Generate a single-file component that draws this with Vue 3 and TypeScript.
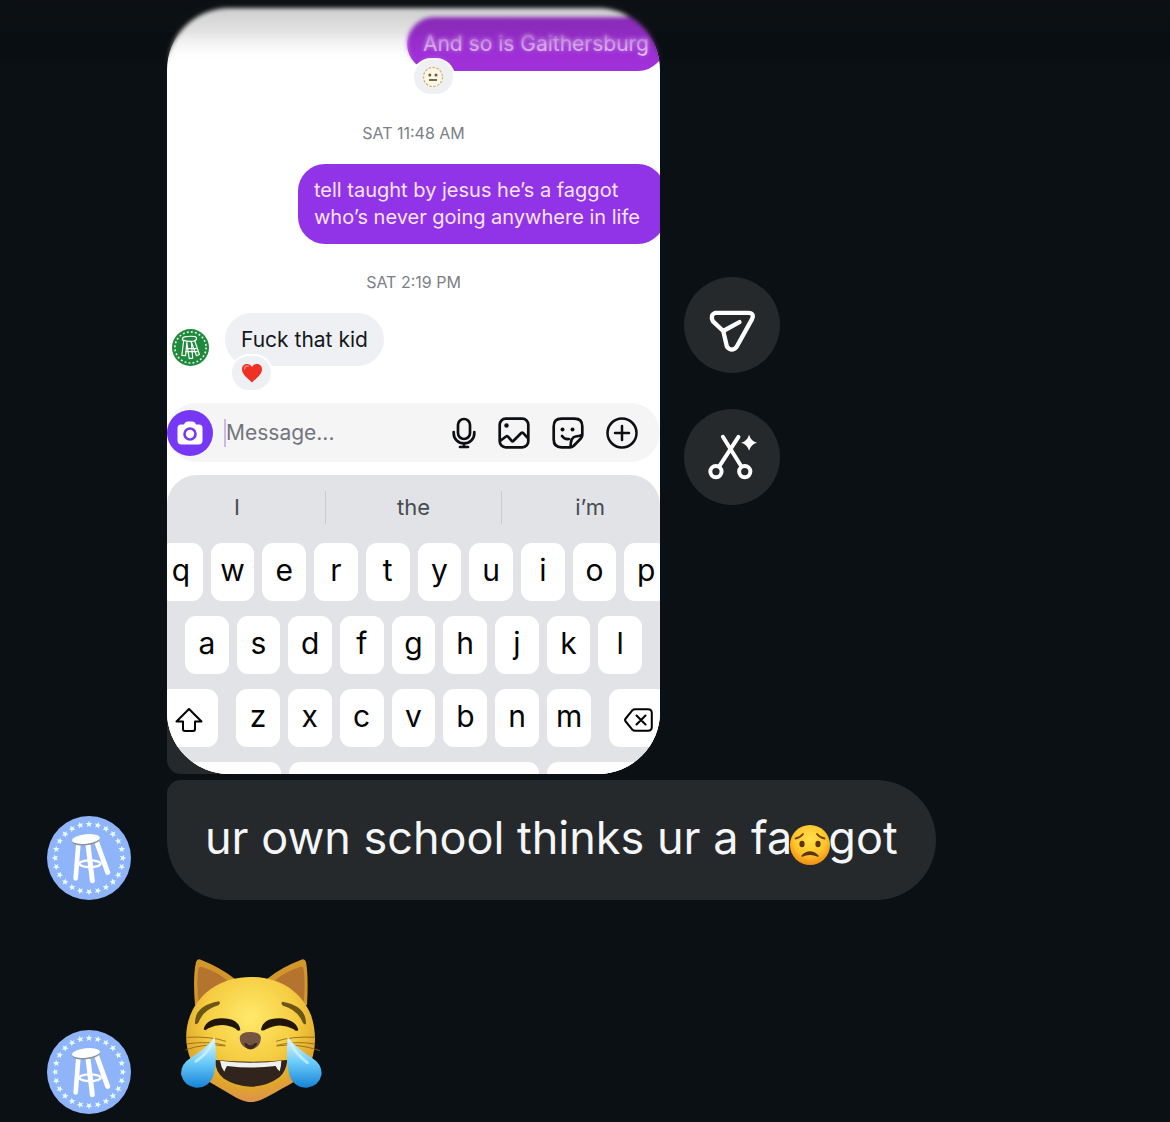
<script setup lang="ts">
import { ref } from 'vue'

interface Star {
  x: number
  y: number
  angle: number
}

const draft = ref('')
const suggestions: string[] = ['I', 'the', 'i’m']
const topRow: string[] = [...'qwertyuiop']
const homeRow: string[] = [...'asdfghjkl']
const bottomRow: string[] = [...'zxcvbnm']

const stars: Star[] = Array.from({ length: 24 }, (_, i) => {
  const turn = (i / 24) * Math.PI * 2
  return {
    x: 177 + Math.sin(turn) * 102,
    y: 174 - Math.cos(turn) * 102,
    angle: i * 15,
  }
})
const starShape = '0,-10 3,-3 10,-3 4.6,2 6.4,9 0,5 -6.4,9 -4.6,2 -10,-3 -3,-3'

function type(key: string): void {
  draft.value += key
}
function erase(): void {
  draft.value = draft.value.slice(0, -1)
}
</script>

<template>
  <main class="thread">
    <svg class="defs" aria-hidden="true">
      <symbol id="badge" viewBox="51 48 252 252">
        <circle cx="177" cy="174" r="126" fill="#8fb4f9" />
        <polygon
          v-for="star in stars"
          :key="star.angle"
          :points="starShape"
          :transform="`translate(${star.x} ${star.y}) rotate(${star.angle})`"
          fill="#e6fbff"
        />
        <g fill="none" stroke="#fff" stroke-linecap="round">
          <ellipse cx="180" cy="191" rx="32" ry="10" stroke-width="7" />
          <path d="M145 132 137 235" stroke-width="14" />
          <path d="M174 134 187 242" stroke-width="15" />
          <path d="M200 126 233 217" stroke-width="15" />
        </g>
        <ellipse cx="168" cy="122" rx="41" ry="14" fill="#8a94a0" transform="rotate(-6 168 122)" />
        <ellipse cx="168" cy="117" rx="42" ry="14" fill="#fff" transform="rotate(-6 168 117)" />
      </symbol>
    </svg>

    <section class="row">
      <div class="shot-wrap">
        <article class="shot">
          <div class="chat">
            <div class="bubble sent first">
              And so is Gaithersburg
              <span class="reaction">
                <svg width="22" height="22" viewBox="0 0 22 22" role="img" aria-label="neutral face">
                  <circle cx="11" cy="11" r="9.5" fill="#fbf6e6" stroke="#d3b873" stroke-width="1.3" stroke-dasharray="2.5 1.5" />
                  <circle cx="7.8" cy="9" r="1.5" fill="#6b5a3c" />
                  <circle cx="14" cy="9" r="1.5" fill="#6b5a3c" />
                  <path d="M7 14h8" stroke="#7a684a" stroke-width="1.8" />
                </svg>
              </span>
            </div>
            <time class="stamp">SAT 11:48 AM</time>
            <div class="bubble sent long">tell taught by jesus he’s a faggot<br />who’s never going anywhere in life</div>
            <time class="stamp">SAT 2:19 PM</time>
            <div class="incoming">
              <svg class="mini" viewBox="51 48 252 252" role="img" aria-label="Profile picture">
                <circle cx="177" cy="174" r="126" fill="#1f8a3b" />
                <circle cx="177" cy="174" r="106" fill="none" stroke="#e9f7ec" stroke-width="11" stroke-dasharray="13 14.7" />
                <g fill="none" stroke="#fff" stroke-width="8" stroke-linejoin="round">
                  <path d="M122 122q-2-16 14-20 40-8 74-2 10 4 8 18l-12 12 32 92-20 8-36-96 10 112-24 4-16-112-8 92-26-2 12-98z" />
                  <path d="M146 182h74M144 202h82M126 124q44 16 88 2" />
                </g>
              </svg>
              <div class="bubble received">
                Fuck that kid
                <span class="reaction">
                  <svg width="22" height="20" viewBox="0 0 22 20" role="img" aria-label="heart">
                    <path d="M11 19.500C7 15.500 1 11.500 1 6.200 1 .5 8.500-.8 11 4c2.500-4.800 10-3.500 10 2.200 0 5.300-6 9.300-10 13.300z" fill="#ee3124" />
                    <path d="M3.500 6c0-2.400 2-3.400 3.600-3" fill="none" stroke="#ff8a70" stroke-width="1.500" stroke-linecap="round" />
                  </svg>
                </span>
              </div>
            </div>
          </div>

          <form class="composer" @submit.prevent>
            <button class="camera" type="button" aria-label="Camera">
              <svg width="26" height="24" viewBox="0 0 26 24">
                <path d="M7.500 2.500Q8.500.5 10.500.5h5q2 0 3 2l.5 1h3q3.500 0 3.500 3.500v12.500q0 4-4 4h-17q-4 0-4-4V7q0-3.500 3.500-3.500H7z" fill="#fff" />
                <circle cx="13" cy="13" r="5.500" fill="none" stroke="#7638f5" stroke-width="2.600" />
              </svg>
            </button>
            <input v-model="draft" class="field" type="text" aria-label="Message" placeholder="Message..." />
            <div class="tools">
              <button type="button" aria-label="Voice message">
                <svg width="24" height="32" viewBox="0 0 24 32" fill="none" stroke="#0d0f12" stroke-width="2.700" stroke-linecap="round">
                  <rect x="6" y="2" width="12" height="20" rx="6" />
                  <path d="M1.700 15v1.500a10.300 9.800 0 0 0 20.600 0V15M12 26.500V30M8 30h8" />
                </svg>
              </button>
              <button type="button" aria-label="Photo">
                <svg width="32" height="32" viewBox="0 0 32 32" fill="none" stroke="#0d0f12" stroke-width="2.700" stroke-linejoin="round">
                  <rect x="1.700" y="1.700" width="28.600" height="28.600" rx="6" />
                  <circle cx="8.500" cy="8.500" r="2.200" fill="#0d0f12" stroke="none" />
                  <path d="M2 24 8 19.500q1-.8 2 .2l3.500 4q1 1 2 0l7.500-7.500q1.200-1 2.300 0l5 5.500" />
                </svg>
              </button>
              <button type="button" aria-label="Sticker">
                <svg width="32" height="32" viewBox="0 0 32 32" fill="none" stroke="#0d0f12" stroke-width="2.700" stroke-linejoin="round" stroke-linecap="round">
                  <path d="M18 30.300H9.500q-7.800 0-7.800-7.800v-13q0-7.800 7.800-7.800h13q7.800 0 7.800 7.800V18q0 2-1.500 3.500L21.500 29Q20 30.300 18 30.300zM18.500 30q.2-10 5-10.500 3.500-.3 6.500-1.500" />
                  <path d="M10 19q2.500 3.600 7 3" />
                  <circle cx="10.500" cy="12.500" r="2" fill="#0d0f12" stroke="none" />
                  <circle cx="20.500" cy="12.500" r="2" fill="#0d0f12" stroke="none" />
                </svg>
              </button>
              <button type="button" aria-label="More">
                <svg width="32" height="32" viewBox="0 0 32 32" fill="none" stroke="#0d0f12" stroke-width="2.500" stroke-linecap="round">
                  <circle cx="16" cy="16" r="14.500" />
                  <path d="M16 9v14M9 16h14" />
                </svg>
              </button>
            </div>
          </form>

          <div class="keyboard">
            <div class="suggestions">
              <button v-for="word in suggestions" :key="word" type="button" @click="type(word + ' ')">
                {{ word }}
              </button>
            </div>
            <div class="keys">
              <button v-for="key in topRow" :key="key" class="key" type="button" @click="type(key)">{{ key }}</button>
            </div>
            <div class="keys home">
              <button v-for="key in homeRow" :key="key" class="key" type="button" @click="type(key)">{{ key }}</button>
            </div>
            <div class="keys lower">
              <button class="key side" type="button" aria-label="Shift">
                <svg width="28" height="26" viewBox="0 0 28 26" fill="none" stroke="#000" stroke-width="2" stroke-linejoin="round">
                  <path d="M14 2 26.500 14.500H20V22q0 2-2 2h-8q-2 0-2-2v-7.500H1.500z" />
                </svg>
              </button>
              <div class="keys letters">
                <button v-for="key in bottomRow" :key="key" class="key" type="button" @click="type(key)">{{ key }}</button>
              </div>
              <button class="key side" type="button" aria-label="Delete" @click="erase">
                <svg width="29" height="24" viewBox="0 0 29 24" fill="none" stroke="#000" stroke-width="2" stroke-linejoin="round" stroke-linecap="round">
                  <path d="M11 1.200h13q3.800 0 3.800 3.800v14q0 3.800-3.800 3.800H11q-1.500 0-2.500-1L1.700 13.500q-1.300-1.500 0-3L8.500 2.200q1-1 2.500-1zM12.500 7.500l9 9M21.500 7.500l-9 9" />
                </svg>
              </button>
            </div>
            <div class="keys cut">
              <button class="key" type="button" aria-label="Numbers"></button>
              <button class="key space" type="button" aria-label="Space"></button>
              <button class="key" type="button" aria-label="Return"></button>
            </div>
          </div>
        </article>
      </div>

      <div class="actions">
        <button type="button" aria-label="Share">
          <svg width="47" height="44" viewBox="115 148 142 132" fill="none" stroke="#fff" stroke-width="13" stroke-linecap="round" stroke-linejoin="round">
            <path d="M135 159H234Q253 160 245 178L199 261Q184 279 169 261L158 214 127 185Q117 164 135 159zM158 214 207 187" />
          </svg>
        </button>
        <button type="button" aria-label="Cut out sticker">
          <svg width="51" height="48" viewBox="108 520 154 144" fill="none" stroke="#fff" stroke-width="12" stroke-linecap="round">
            <path d="M156 531 211 619M203 531 146 619" />
            <circle cx="135" cy="636" r="17" />
            <circle cx="222" cy="636" r="17" />
            <path d="M235 525q6 20 24 24-18 5-24 24-6-19-24-24 18-4 24-24z" fill="#fff" stroke="none" />
          </svg>
        </button>
      </div>
    </section>

    <section class="row message">
      <svg class="avatar" role="img" aria-label="Profile picture"><use href="#badge" /></svg>
      <p class="reply">
        <span>ur own school thinks ur a fa</span>
        <svg class="sad" viewBox="0 0 40 40" role="img" aria-label="worried face">
          <defs>
            <radialGradient id="sadFill" cx=".5" cy=".35" r=".65">
              <stop offset="0" stop-color="#ffe04a" />
              <stop offset=".6" stop-color="#ffc62b" />
              <stop offset="1" stop-color="#ee8d13" />
            </radialGradient>
          </defs>
          <circle cx="20" cy="20" r="20" fill="url(#sadFill)" />
          <ellipse cx="12" cy="19" rx="2.600" ry="3.200" fill="#5b3510" />
          <ellipse cx="28" cy="19" rx="2.600" ry="3.200" fill="#5b3510" />
          <path d="M5.500 13.500q5-1 7.500-4.500M34.500 13.500q-5-1-7.500-4.500" fill="none" stroke="#704010" stroke-width="1.800" stroke-linecap="round" />
          <path d="M12 31q8-8 16 0-8-3.500-16 0z" fill="#5b3510" stroke="#5b3510" stroke-width="1.500" stroke-linejoin="round" />
        </svg>
        <span>got</span>
      </p>
    </section>

    <section class="row message emoji-row">
      <svg class="avatar" role="img" aria-label="Profile picture"><use href="#badge" /></svg>
      <svg class="cat" viewBox="60 54 426 432" role="img" aria-label="cat with tears of joy">
        <defs>
          <radialGradient id="fur" cx=".5" cy=".32" r=".66">
            <stop offset="0" stop-color="#ffe96b" />
            <stop offset=".55" stop-color="#f5cc40" />
            <stop offset=".85" stop-color="#dfa62c" />
            <stop offset="1" stop-color="#dd9448" />
          </radialGradient>
          <linearGradient id="tear" x1="0" y1="0" x2="0" y2="1">
            <stop offset="0" stop-color="#e4faff" />
            <stop offset=".5" stop-color="#6bcbfa" />
            <stop offset="1" stop-color="#1683d6" />
          </linearGradient>
        </defs>
        <path d="M105 195Q98 110 108 66q4-12 16-6 56 22 100 56l-20 80zM441 195q5-85-3-129-4-12-16-6-58 22-100 56l20 80z" fill="#d2972a" />
        <path d="M116 190q-8-68 0-106 4-6 12-2 44 14 74 40l-20 60zM431 190q6-68-1-106-4-6-12-2-44 14-74 40l20 60z" fill="#b57330" />
        <path d="M272 111c88 0 152 44 180 112 16 42 18 96 2 140-14 38-40 58-72 74-38 20-78 48-110 50-32-2-72-32-108-52-36-20-58-42-72-76-18-44-18-94 0-136 30-70 96-112 180-112z" fill="url(#fur)" />
        <path d="M105 251q-2-54 72-67 6 5-2 12-44 12-60 52-6 7-10 3zM438 252q2-54-71-67-6 5 2 12 44 12 60 52 5 7 9 3z" fill="#6b5517" />
        <path d="M131 268q8-32 54-33 50 0 56 34-6 8-14-3-40-22-82-1-10 9-14 3zM303 269q6-34 54-34 48 2 58 34-4 8-15-2-40-22-82 1-10 7-15 1z" fill="#211409" />
        <path d="M239 293q2-17 32-17 30 0 32 17-2 28-26 34-10 2-16-2-22-8-22-32z" fill="#765442" />
        <path d="M252 310q8-4 12 4 6 4 14 0 6-8 14-4-6 14-15 17-7 2-14-1-8-4-11-16z" fill="#3d2920" />
        <path d="M80 292q70-4 118 12M80 312q60-10 116 4M76 330q60-22 120-12M466 292q-70-4-118 12M466 312q-60-10-116 4M480 332q-70-24-130-14" fill="none" stroke="#8b6516" stroke-width="2.500" />
        <path d="M166 360q106 10 216 0-4 36-24 52-38 28-86 28-46-2-80-24-28-22-26-56z" fill="#30241c" />
        <path d="M180 362q92 12 184 0 0 16-5 32-8-6-12-16-74 9-146 0-6 10-8 17-10-13-13-33z" fill="#f2efec" />
        <path d="M164 291q8 70-2 110-12 42-54 42-36-4-45-40-1-32 30-50 44-26 71-62z" fill="url(#tear)" />
        <path d="M383 291q-6 70 4 110 12 42 54 42 36-4 44-40 1-32-30-50-44-26-72-62z" fill="url(#tear)" />
        <path d="M154 314q-12 26-46 50M394 314q14 28 48 54" fill="none" stroke="#d8f6ff" stroke-width="9" stroke-linecap="round" opacity=".65" />
      </svg>
    </section>
    <div class="topshade"></div>
  </main>
</template>

<style>
body {
  margin: 0;
  background: #0b1014;
}
</style>

<style scoped>
* {
  box-sizing: border-box;
}
.thread {
  position: relative;
  overflow: hidden;
  min-height: 100vh;
  padding: 8px 16px 8px 47px;
  background: #0b1014;
  font-family: Inter, "Liberation Sans", sans-serif;
}
.defs {
  position: absolute;
  width: 0;
  height: 0;
}
button {
  padding: 0;
  border: 0;
  background: none;
  color: inherit;
  font: inherit;
}
svg {
  display: block;
  flex: none;
}
.row {
  display: flex;
  align-items: center;
  gap: 24px;
  padding-left: 120px;
}
.shot-wrap {
  position: relative;
  flex: 0 1 493px;
  min-width: 0;
}
.shot-wrap::before {
  content: "";
  position: absolute;
  left: 0;
  bottom: 0;
  width: 80px;
  height: 80px;
  border-radius: 0 0 0 14px;
  background: #25292c;
}
.shot {
  position: relative;
  overflow: hidden;
  border-radius: 62px;
  background: #fff;
}
.chat {
  display: flex;
  flex-direction: column;
  padding-top: 9px;
}
.bubble {
  position: relative;
  padding: 13px 16px;
  border-radius: 27px;
  font-size: 21px;
  line-height: 27px;
  white-space: nowrap;
}
.sent {
  align-self: flex-end;
  margin-right: -5px;
  background: #9134e8;
  color: #f8e4ff;
}
.first {
  padding-bottom: 14px;
  background: #a030d8;
}
.long {
  min-width: 367px;
  font-size: 20px;
}
.reaction {
  position: absolute;
  left: 5px;
  top: 41px;
  display: flex;
  align-items: center;
  justify-content: center;
  width: 43px;
  height: 38px;
  border: 2px solid #fff;
  border-radius: 19px;
  background: #eff0f4;
}
.stamp {
  margin: 52px 0 21px;
  color: #7b8087;
  font-size: 16px;
  line-height: 20px;
  text-align: center;
}
.stamp + .bubble + .stamp {
  margin: 28px 0 21px;
}
.incoming {
  display: flex;
  align-items: flex-end;
  gap: 16px;
  padding-left: 5px;
}
.mini {
  width: 37px;
  height: 37px;
}
.received {
  background: #eff0f4;
  color: #15181c;
}
.composer {
  display: flex;
  align-items: center;
  gap: 11px;
  height: 59px;
  margin: 37px 0 13px;
  padding: 0 22px 0 0;
  border-radius: 30px;
  background: #f5f5f6;
}
.camera {
  display: flex;
  flex: none;
  align-items: center;
  justify-content: center;
  width: 46px;
  height: 46px;
  border-radius: 50%;
  background: #7638f5;
}
.field {
  flex: 1;
  min-width: 0;
  height: 28px;
  padding: 0;
  border: 0;
  border-left: 2px solid #cdb6ee;
  background: none;
  color: #15181c;
  font: 21px/28px Inter, "Liberation Sans", sans-serif;
  outline: 0;
}
.field::placeholder {
  color: #72767c;
  opacity: 1;
}
.tools {
  display: flex;
  gap: 22px;
}
.keyboard {
  height: 299px;
  overflow: hidden;
  border-radius: 30px 30px 0 0;
  background: #e1e3e7;
}
.suggestions {
  display: flex;
  margin: 16px -18px 19px;
}
.suggestions button {
  flex: 1;
  height: 33px;
  color: #484b50;
  font-size: 22px;
  line-height: 33px;
}
.suggestions button + button {
  border-left: 1px solid #c9ccd1;
}
.keys {
  display: flex;
  gap: 8px;
  margin: 0 -8px 15px;
}
.key {
  display: flex;
  flex: 1 1 0;
  align-items: center;
  justify-content: center;
  min-width: 0;
  height: 58px;
  padding-bottom: 4px;
  border-radius: 11px;
  background: #fff;
  color: #050505;
  font-size: 30px;
  line-height: 36px;
}
.home {
  padding: 0 26px;
}
.lower {
  gap: 18px;
}
.letters {
  flex: 1;
  margin: 0;
}
.side {
  flex: 0 0 59px;
  padding-top: 4px;
  padding-bottom: 0;
}
.space {
  flex: 0 0 250px;
}
.actions {
  display: flex;
  flex-direction: column;
  gap: 36px;
}
.actions button {
  display: flex;
  align-items: center;
  justify-content: center;
  width: 96px;
  height: 96px;
  border-radius: 50%;
  background: #25292c;
}
.actions svg {
  margin-top: 12px;
}
.actions button:last-child svg {
  margin-top: 0;
}
.message {
  align-items: flex-end;
  gap: 36px;
  margin-top: 6px;
  padding-left: 0;
}
.avatar {
  width: 84px;
  height: 84px;
}
.reply {
  display: flex;
  align-items: center;
  min-height: 120px;
  margin: 0;
  padding: 0 38px 4px;
  border-radius: 14px 60px 60px 60px;
  background: #25292c;
  color: #f4f6f8;
  font-size: 45px;
  line-height: 60px;
  white-space: nowrap;
}
.sad {
  width: 40px;
  height: 40px;
  margin: 14px -2px 0;
}
.emoji-row {
  gap: 49px;
  margin-top: 58px;
}
.cat {
  width: 142px;
  height: 144px;
  margin-bottom: 12px;
}
.topshade {
  position: absolute;
  inset: 0 0 auto;
  height: 64px;
  background: linear-gradient(rgba(20, 20, 20, 0.24), rgba(20, 20, 20, 0));
  backdrop-filter: blur(2px);
  mask-image: linear-gradient(#000 50%, transparent);
  pointer-events: none;
}
</style>
